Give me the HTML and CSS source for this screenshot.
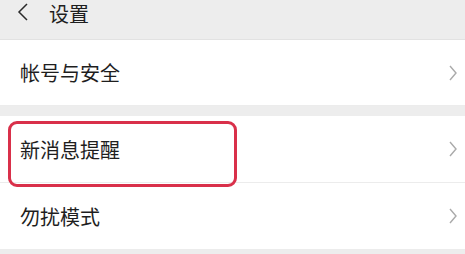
FILE: index.html
```html
<!DOCTYPE html>
<html lang="zh-CN">
<head>
    <meta charset="UTF-8">
    <meta name="viewport" content="width=device-width, initial-scale=1.0">
    <title>设置</title>
    <link rel="stylesheet" href="styles.css">
</head>
<body>
    <div class="header">
        <svg class="back" width="12" height="18" viewBox="0 0 12 18">
            <path d="M10 1 L2 9 L10 17" fill="none" stroke="#2a2a2a" stroke-width="1.5"/>
        </svg>
        <span class="title">设置</span>
    </div>

    <div class="group">
        <div class="item">
            <span class="label">帐号与安全</span>
            <svg class="arrow" width="10" height="18" viewBox="0 0 10 18">
                <path d="M2 2 L8 9 L2 16" fill="none" stroke="#aaa" stroke-width="1.4"/>
            </svg>
        </div>
    </div>

    <div class="group">
        <div class="item">
            <span class="label">新消息提醒</span>
            <svg class="arrow" width="10" height="18" viewBox="0 0 10 18">
                <path d="M2 2 L8 9 L2 16" fill="none" stroke="#aaa" stroke-width="1.4"/>
            </svg>
            <div class="highlight"></div>
        </div>
        <div class="item">
            <span class="label">勿扰模式</span>
            <svg class="arrow" width="10" height="18" viewBox="0 0 10 18">
                <path d="M2 2 L8 9 L2 16" fill="none" stroke="#aaa" stroke-width="1.4"/>
            </svg>
        </div>
    </div>
</body>
</html>
```

FILE: styles.css
```css
/* General Styles */
body {
    font-family: 'Noto Sans CJK SC', 'Noto Sans', sans-serif;
    margin: 0;
    background-color: #ededed;
    color: #1e1e1e;
    overflow: hidden;
}

/* Header Styles */
.header {
    display: flex;
    align-items: flex-start;
    height: 40px;
    padding-left: 17px;
    padding-top: 3px;
    background-color: #ededed;
    border-bottom: 1px solid #e2e2e2;
    box-sizing: border-box;
}

.title {
    font-size: 20px;
    line-height: 22px;
    margin-left: 20px;
}

/* List Styles */
.group {
    background-color: #fff;
    margin-bottom: 10px;
}

.item {
    position: relative;
    display: flex;
    align-items: center;
    justify-content: space-between;
    height: 66px;
    padding: 0 7px 0 20px;
    border-bottom: 1px solid #ececec;
    box-sizing: border-box;
}

.group + .group .item {
    height: 67px;
}

.label {
    font-size: 20px;
}

/* Highlight Box */
.highlight {
    position: absolute;
    left: 8px;
    top: 5px;
    width: 229px;
    height: 66px;
    border: 3px solid #d9304a;
    border-radius: 9px;
    box-sizing: border-box;
}
```
